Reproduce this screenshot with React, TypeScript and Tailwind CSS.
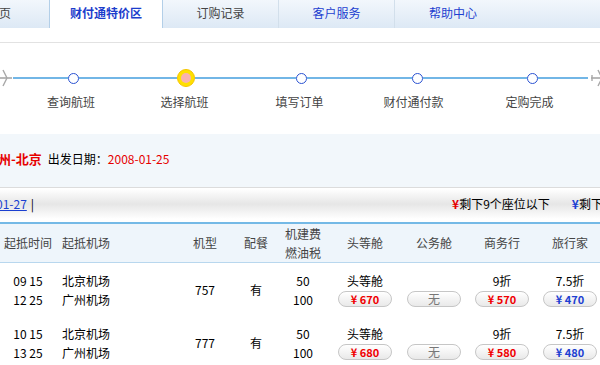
import React from "react";

function Plane() {
  return (
    <svg width="18" height="18" viewBox="0 0 18 18" className="shrink-0">
      <path d="M1 9 L17 9" stroke="#a8a8a8" strokeWidth="1.6" fill="none" />
      <path d="M2 6 L2 12" stroke="#a8a8a8" strokeWidth="1.4" fill="none" />
      <path d="M12 9 Q10 5 8 1 M12 9 Q10 13 8 17" stroke="#a8a8a8" strokeWidth="1.4" fill="none" />
    </svg>
  );
}

function Dot() {
  return <div className="w-[11px] h-[11px] shrink-0 rounded-full border border-[#2a52d2] bg-white" />;
}

function Seg({ w }: { w: string }) {
  return <div className={`${w} h-[2px] shrink-0 bg-[#72b6e6]`} />;
}

function PriceBtn({ price, color }: { price?: string; color?: "red" | "blue" }) {
  return (
    <div className="mx-auto w-[54px] h-[16px] rounded-full border border-[#c6c6c6] bg-gradient-to-b from-white to-[#e9e9e9] flex items-center justify-center">
      {price ? (
        <span
          className={`text-[11px] leading-none font-bold ${color === "red" ? "text-[#f00000]" : "text-[#1d3fd2]"}`}
        >
          ¥ {price}
        </span>
      ) : (
        <span className="text-[12px] leading-none text-[#777]">无</span>
      )}
    </div>
  );
}

const cols = "grid grid-cols-[56px_124px_50px_52px_42px_82px_56px_80px_56px]";

function Row({
  t1,
  t2,
  model,
  p1,
  p3,
  p4,
}: {
  t1: string;
  t2: string;
  model: string;
  p1: string;
  p3: string;
  p4: string;
}) {
  return (
    <div className={`${cols} h-[53px] items-center text-[12px] text-black`}>
      <div className="flex flex-col items-center">
        <div className="h-[19px] leading-[19px]">{t1}</div>
        <div className="h-[19px] leading-[19px]">{t2}</div>
      </div>
      <div className="flex flex-col pl-[6px]">
        <div className="h-[19px] leading-[19px]">北京机场</div>
        <div className="h-[19px] leading-[19px]">广州机场</div>
      </div>
      <div className="text-center">{model}</div>
      <div className="text-center">有</div>
      <div className="flex flex-col items-center">
        <div className="h-[19px] leading-[19px]">50</div>
        <div className="h-[19px] leading-[19px]">100</div>
      </div>
      <div className="flex flex-col items-center">
        <div className="h-[19px] leading-[19px]">头等舱</div>
        <div className="h-[19px] flex items-center w-full">
          <PriceBtn price={p1} color="red" />
        </div>
      </div>
      <div className="flex flex-col items-center">
        <div className="h-[19px] leading-[19px]"></div>
        <div className="h-[19px] flex items-center w-full">
          <PriceBtn />
        </div>
      </div>
      <div className="flex flex-col items-center">
        <div className="h-[19px] leading-[19px]">9折</div>
        <div className="h-[19px] flex items-center w-full">
          <PriceBtn price={p3} color="red" />
        </div>
      </div>
      <div className="flex flex-col items-center">
        <div className="h-[19px] leading-[19px]">7.5折</div>
        <div className="h-[19px] flex items-center w-full">
          <PriceBtn price={p4} color="blue" />
        </div>
      </div>
    </div>
  );
}

export default function App() {
  return (
    <div className="w-[600px] h-[365px] overflow-hidden bg-white font-['Noto_Sans_CJK_SC',sans-serif] text-[12px]">
      {/* Tabs */}
      <div className="h-[28px] flex bg-gradient-to-b from-[#f2f7fc] to-[#dde9f5] text-[12px]">
        <div className="ml-[-51px] w-[100px] shrink-0 flex items-center justify-center pb-[2px] text-[#444]">首页</div>
        <div className="w-[114px] shrink-0 flex items-center justify-center pb-[2px] bg-white border-x border-[#b3cfe8] font-bold text-[#1c3dcc]">
          财付通特价区
        </div>
        <div className="w-[116px] shrink-0 flex items-center justify-center pb-[2px] border-r border-[#d2dfeb] text-[#444]">
          订购记录
        </div>
        <div className="w-[116px] shrink-0 flex items-center justify-center pb-[2px] border-r border-[#d2dfeb] text-[#1d3fd0]">
          客户服务
        </div>
        <div className="w-[116px] shrink-0 flex items-center justify-center pb-[2px] text-[#1d3fd0]">帮助中心</div>
      </div>
      <div className="mt-[14px] h-px bg-[#e2e2e2]" />

      {/* Progress */}
      <div className="mt-[26px] h-[18px] flex items-center">
        <div className="ml-[-5px] flex">
          <Plane />
        </div>
        <Seg w="w-[55px]" />
        <Dot />
        <Seg w="w-[98px]" />
        <div className="w-[18px] h-[18px] shrink-0 rounded-full bg-[#ffe000] border border-[#f5c400] flex items-center justify-center">
          <div className="w-[10px] h-[10px] rounded-full bg-[#f9b2b0]" />
        </div>
        <Seg w="w-[101px]" />
        <Dot />
        <Seg w="w-[105px]" />
        <Dot />
        <Seg w="w-[104px]" />
        <Dot />
        <Seg w="w-[50px]" />
        <div className="ml-[2px] flex">
          <Plane />
        </div>
      </div>
      <div className="mt-[7px] flex text-[12px] leading-[16px] text-[#444]">
        <div className="ml-[13px] w-[116px] shrink-0 text-center">查询航班</div>
        <div className="w-[111px] shrink-0 text-center">选择航班</div>
        <div className="w-[119px] shrink-0 text-center">填写订单</div>
        <div className="w-[109px] shrink-0 text-center">财付通付款</div>
        <div className="w-[123px] shrink-0 text-center">定购完成</div>
      </div>

      {/* Route header */}
      <div className="mt-[24px] h-[54px] bg-[#f2f7fb] border-b border-[#dcdcdc] flex items-center pb-[3px]">
        <span className="ml-[-15px] text-[13px] font-bold text-[#e60000] whitespace-nowrap">广州-北京</span>
        <span className="ml-[6px] text-[12px] text-black">出发日期：</span>
        <span className="text-[12px] text-[#e60000]">2008-01-25</span>
      </div>

      {/* date bar */}
      <div className="mt-[1px] h-[30px] bg-gradient-to-b from-white via-[#e6e6e6] to-white flex items-center text-[12px] whitespace-nowrap">
        <span className="ml-[-4px] text-[#1a3fd0] underline">01-27</span>
        <span className="ml-[4px] text-black">|</span>
        <span className="ml-[418px] font-bold text-[#e60000]">¥</span>
        <span className="text-black">剩下9个座位以下</span>
        <span className="ml-[22px] font-bold text-[#1d3fd2]">¥</span>
        <span className="text-black">剩下9个座位以上</span>
      </div>

      {/* table header */}
      <div
        className={`${cols} mt-[3px] h-[41px] border-t-2 border-t-[#74b9e6] border-b border-b-[#b8d7ee] bg-[#eef5fb] items-center text-[12px] text-[#444]`}
      >
        <div className="text-center">起抵时间</div>
        <div className="pl-[6px]">起抵机场</div>
        <div className="text-center">机型</div>
        <div className="text-center">配餐</div>
        <div className="text-center leading-[19px]">
          机建费
          <br />
          燃油税
        </div>
        <div className="text-center">头等舱</div>
        <div className="text-center">公务舱</div>
        <div className="text-center">商务行</div>
        <div className="text-center">旅行家</div>
      </div>

      <Row t1="09 15" t2="12 25" model="757" p1="670" p3="570" p4="470" />
      <Row t1="10 15" t2="13 25" model="777" p1="680" p3="580" p4="480" />
    </div>
  );
}
